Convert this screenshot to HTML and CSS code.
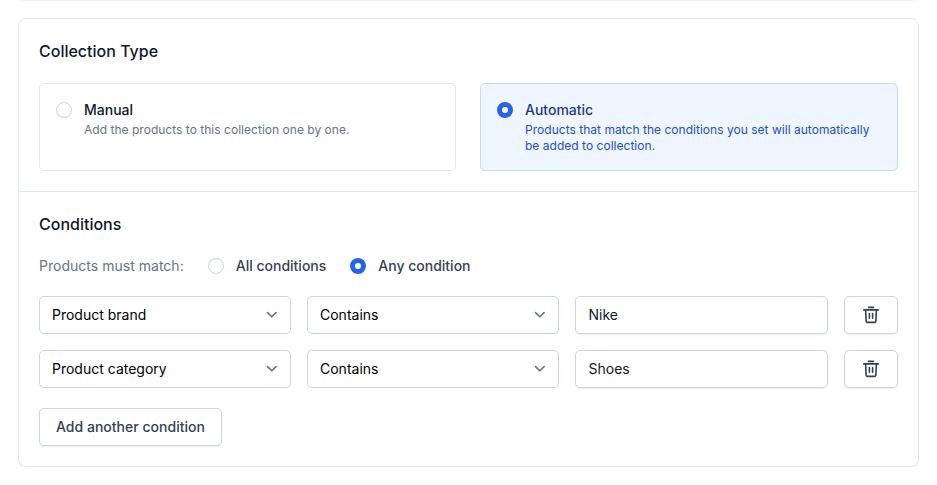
FILE: index.html
```html
<!DOCTYPE html>
<html lang="en">
<head>
<meta charset="utf-8">
<title>Collection</title>
<link rel="stylesheet" href="styles.css">
</head>
<body>
<div class="prev-edge"></div>
<svg class="defs" width="0" height="0">
  <symbol id="chevron" viewBox="0 0 20 20"><path d="M5.5 7.6l4.3 4.2 4.3-4.2" fill="none" stroke="currentColor" stroke-width="1.6" stroke-linecap="round" stroke-linejoin="round"/></symbol>
  <symbol id="trash" viewBox="0 0 20 20"><g fill="none" stroke="currentColor" stroke-width="1.6" stroke-linecap="round" stroke-linejoin="round"><path d="M2.7 4.9h14.6M7.6 2.4h4.8M4.6 5l.5 10.4a2 2 0 0 0 2 2h5.8a2 2 0 0 0 2-2L15.4 5M8.4 8.6v4.7M11.6 8.6v4.7"/></g></symbol>
</svg>
<main class="card">
  <section class="section">
    <h2>Collection Type</h2>
    <div class="options">
      <label class="option">
        <span class="radio"></span>
        <span><span class="option-title">Manual</span><span class="option-text">Add the products to this collection one by one.</span></span>
      </label>
      <label class="option selected">
        <span class="radio checked"></span>
        <span><span class="option-title">Automatic</span><span class="option-text">Products that match the conditions you set will automatically be added to collection.</span></span>
      </label>
    </div>
  </section>
  <section class="section">
    <h2>Conditions</h2>
    <div class="match">
      <span class="match-label">Products must match:</span>
      <label class="choice"><span class="radio"></span>All conditions</label>
      <label class="choice"><span class="radio checked"></span>Any condition</label>
    </div>
    <div class="rows">
      <div class="row">
        <div class="field">Product brand<svg class="chevron"><use href="#chevron"/></svg></div>
        <div class="field">Contains<svg class="chevron"><use href="#chevron"/></svg></div>
        <div class="field input">Nike</div>
        <button class="button" aria-label="Delete"><svg class="trash"><use href="#trash"/></svg></button>
      </div>
      <div class="row">
        <div class="field">Product category<svg class="chevron"><use href="#chevron"/></svg></div>
        <div class="field">Contains<svg class="chevron"><use href="#chevron"/></svg></div>
        <div class="field input">Shoes</div>
        <button class="button" aria-label="Delete"><svg class="trash"><use href="#trash"/></svg></button>
      </div>
    </div>
    <button class="button add">Add another condition</button>
  </section>
</main>
</body>
</html>
```
FILE: styles.css
```css
* { box-sizing: border-box; }
body {
  margin: 0;
  background: #fff;
  font: 400 14px/20px Inter, sans-serif;
  color: #0f172a;
}
.defs { display: none; }
.prev-edge {
  height: 1px;
  margin: 0 20px 17px;
  background: linear-gradient(90deg, #fff, #f1f2f3 5px, #f1f2f3 calc(100% - 5px), #fff);
}
.card {
  margin: 0 18px;
  border: 1px solid #e2e8f0;
  border-radius: 8px;
  box-shadow: 0 1px 2px rgba(0, 0, 0, .06);
}
.section { padding: 20px; }
.section + .section { border-top: 1px solid #e2e8f0; }
h2 { margin: 0 0 20px; font-size: 16px; line-height: 24px; font-weight: 500; }
.options { display: grid; grid-template-columns: 417px 1fr; gap: 24px; }
.option {
  display: flex;
  gap: 12px;
  padding: 16px;
  border: 1px solid #e2e8f0;
  border-radius: 5px;
}
.option .radio { margin-top: 2px; }
.option-title { display: block; font-weight: 500; margin-bottom: 2px; }
.option-text { display: block; font-size: 12px; line-height: 16px; letter-spacing: .025px; color: #64748b; }
.selected { background: #eff6ff; border-color: #bfdbfe; }
.selected .option-title { color: #1e3a8a; }
.selected .option-text { color: #1d4ed8; }
.radio {
  flex: none;
  width: 16px;
  height: 16px;
  border: 1px solid #cbd5e1;
  border-radius: 50%;
  background: #fff;
}
.radio.checked { border: 5px solid #2563eb; }
.match { display: flex; gap: 24px; margin-bottom: 20px; }
.match-label { letter-spacing: .02px; color: #64748b; }
.choice { display: flex; align-items: center; gap: 12px; font-weight: 500; color: #334155; }
.rows { display: grid; gap: 16px; }
.row { display: grid; grid-template-columns: 252px 252px 1fr 54px; gap: 16px; }
.field {
  display: flex;
  align-items: center;
  justify-content: space-between;
  height: 38px;
  padding: 0 8.5px 0 12px;
  border: 1px solid #cbd5e1;
  border-radius: 5px;
  color: #000;
}
.input { padding-left: 12.5px; color: #0f172a; box-shadow: 0 1px 2px rgba(0, 0, 0, .07); }
.button {
  display: flex;
  align-items: center;
  justify-content: center;
  height: 38px;
  padding: 0 16px;
  border: 1px solid #cbd5e1;
  border-radius: 5px;
  background: #fff;
  box-shadow: 0 1px 2px rgba(0, 0, 0, .07);
  font: inherit;
  font-weight: 500;
  color: #334155;
}
.add { margin-top: 20px; width: 183px; white-space: nowrap; letter-spacing: .02px; }
.chevron { width: 20px; height: 20px; color: #64748b; }
.trash { flex: none; width: 20px; height: 20px; }
```
